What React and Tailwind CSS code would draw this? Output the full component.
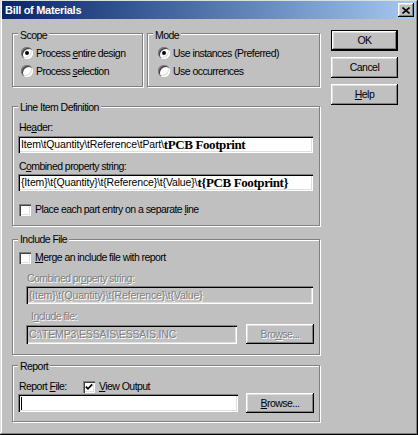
const sans = "font-['Liberation_Sans',Arial,sans-serif]";
const serifBold = "font-['Liberation_Serif','Times_New_Roman',serif] font-bold text-[13px] tracking-[-0.4px]";
const editText = "tracking-[-0.15px]";

const Group = ({ label, className, labelTop = "-top-[7px]", children }) => (
  <div
    className={`relative border border-[#808080] shadow-[inset_1px_1px_0_#fff,1px_1px_0_#fff] ${className}`}
  >
    <span className={`absolute left-[5px] bg-[#c0c0c0] px-[2px] leading-[13px] ${labelTop}`}>
      {label}
    </span>
    {children}
  </div>
);

const Radio = ({ checked }) => (
  <span className="w-[12px] h-[12px] rounded-full bg-white shrink-0 flex items-center justify-center shadow-[inset_1px_1px_0_#808080,inset_2px_2px_0_#404040,inset_-1px_-1px_0_#fff,inset_-2px_-2px_0_#dfdfdf]">
    {checked && <span className="w-[4px] h-[4px] rounded-full bg-black" />}
  </span>
);

const Check = ({ checked }) => (
  <span className="w-[12px] h-[12px] bg-white shrink-0 flex items-center justify-center shadow-[inset_1px_1px_0_#808080,inset_2px_2px_0_#404040,inset_-1px_-1px_0_#fff,inset_-2px_-2px_0_#dfdfdf]">
    {checked && (
      <svg width="8" height="8" viewBox="0 0 8 8">
        <path d="M0.8 3.6 L3 5.8 L7.2 1.4" stroke="#000" strokeWidth="1.8" fill="none" />
      </svg>
    )}
  </span>
);

const Button = ({ children, isDefault, disabled, className = "" }) => (
  <div
    className={`flex items-center justify-center bg-[#c0c0c0] ${
      isDefault ? "border border-black" : ""
    } ${disabled ? "text-[#808080] [text-shadow:1px_1px_0_#fff]" : ""} ${className}`}
  >
    <div className="w-full h-full flex items-center justify-center shadow-[inset_-1px_-1px_0_#000,inset_1px_1px_0_#fff,inset_-2px_-2px_0_#808080,inset_2px_2px_0_#dfdfdf]">
      {children}
    </div>
  </div>
);

const Edit = ({ children, disabled, className = "" }) => (
  <div
    className={`flex items-center pl-[3px] whitespace-nowrap overflow-hidden shadow-[inset_1px_1px_0_#808080,inset_2px_2px_0_#000,inset_-1px_-1px_0_#fff,inset_-2px_-2px_0_#dfdfdf] ${
      disabled ? "bg-[#c0c0c0] text-[#808080] [text-shadow:1px_1px_0_#fff]" : "bg-white"
    } ${className}`}
  >
    {children}
  </div>
);

const Dim = ({ children, className = "" }) => (
  <div className={`text-[#808080] [text-shadow:1px_1px_0_#fff] leading-[13px] ${className}`}>
    {children}
  </div>
);

export default function App() {
  return (
    <div
      className={`w-[418px] h-[435px] bg-[#c0c0c0] pt-[1px] px-[2px] pb-[2px] flex flex-col ${sans} text-[10.5px] tracking-[-0.55px] leading-[13px] text-black shadow-[inset_-1px_-1px_0_#000,inset_1px_1px_0_#dfdfdf,inset_-2px_-2px_0_#808080,inset_2px_2px_0_#fff]`}
    >
      {/* title bar */}
      <div className="h-[18px] shrink-0 flex items-center justify-between pl-[3px] pr-[2px] bg-linear-to-r from-[#0a246a] to-[#a6caf0]">
        <span className="font-bold text-white text-[11px] tracking-[-0.3px]">Bill of Materials</span>
        <Button className="w-[16px] h-[14px]">
          <svg width="8" height="7" viewBox="0 0 8 7">
            <path d="M0.5 0.5 L7.5 6.5 M7.5 0.5 L0.5 6.5" stroke="#000" strokeWidth="1.6" />
          </svg>
        </Button>
      </div>

      <div className="flex pl-[10px]">
        <div className="flex flex-col w-[308px]">
          <div className="flex gap-[4px] mt-[14px]">
            <Group label="Scope" labelTop="-top-[5px]" className="w-[131px] h-[54px] pt-[10px] pl-[8px]">
              <div className="h-[18px] flex items-center gap-[3px]">
                <Radio checked />
                <span>
                  Process <u>e</u>ntire design
                </span>
              </div>
              <div className="h-[18px] flex items-center gap-[3px]">
                <Radio />
                <span>
                  Process <u>s</u>election
                </span>
              </div>
            </Group>
            <Group label="Mode" labelTop="-top-[5px]" className="w-[173px] h-[54px] pt-[10px] pl-[10px]">
              <div className="h-[18px] flex items-center gap-[3px]">
                <Radio checked />
                <span>Use instances (Preferred)</span>
              </div>
              <div className="h-[18px] flex items-center gap-[3px]">
                <Radio />
                <span>Use occurrences</span>
              </div>
            </Group>
          </div>

          <Group
            label="Line Item Definition"
            labelTop="-top-[6px]"
            className="mt-[19px] h-[120px] pl-[5px] flex flex-col"
          >
            <div className="mt-[14px] pl-[1px]">
              He<u>a</u>der:
            </div>
            <Edit className="mt-[2px] h-[17px] w-[295px]">
              <span className={editText}>Item\tQuantity\tReference\tPart\</span>
              <span className={serifBold}>tPCB Footprint</span>
            </Edit>
            <div className="mt-[7px] pl-[1px]">
              C<u>o</u>mbined property string:
            </div>
            <Edit className="mt-[1px] h-[17px] w-[295px]">
              <span className={editText}>{"{Item}\\t{Quantity}\\t{Reference}\\t{Value}\\"}</span>
              <span className={serifBold}>{"t{PCB Footprint}"}</span>
            </Edit>
            <div className="mt-[12px] h-[13px] pl-[1px] flex items-center gap-[4px]">
              <Check />
              <span>
                Place each part entry on a separate <u>l</u>ine
              </span>
            </div>
          </Group>

          <Group label="Include File" className="mt-[13px] h-[116px] pl-[5px] flex flex-col">
            <div className="mt-[11px] h-[13px] pl-[1px] flex items-center gap-[4px]">
              <Check />
              <span>
                <u>M</u>erge an include file with report
              </span>
            </div>
            <Dim className="mt-[8px] ml-[9px]">
              Combined pr<u>o</u>perty string:
            </Dim>
            <Edit disabled className={`mt-[1px] ml-[8px] h-[18px] w-[287px] ${editText}`}>
              {"{Item}\\t{Quantity}\\t{Reference}\\t{Value}"}
            </Edit>
            <Dim className="mt-[6px] ml-[13px]">
              I<u>n</u>clude file:
            </Dim>
            <div className="mt-[1px] ml-[8px] flex items-center gap-[9px] h-[20px]">
              <Edit disabled className={`h-[19px] w-[211px] ${editText}`}>
                C:\TEMP3\ESSAIS\ESSAIS.INC
              </Edit>
              <Button disabled className="w-[68px] h-[20px]">
                <span>
                  Bro<u>w</u>se...
                </span>
              </Button>
            </div>
          </Group>

          <Group label="Report" labelTop="-top-[6px]" className="mt-[10px] h-[57px] pl-[5px] flex flex-col">
            <div className="mt-[14px] h-[13px] flex items-center">
              <span className="w-[65px] pl-[1px]">
                Report <u>F</u>ile:
              </span>
              <Check checked />
              <span className="ml-[4px]">
                <u>V</u>iew Output
              </span>
            </div>
            <div className="flex items-center gap-[8px] h-[20px]">
              <Edit className="h-[18px] w-[220px]">
                <span className="w-[1px] h-[13px] bg-black" />
              </Edit>
              <Button className="w-[68px] h-[20px]">
                <span>
                  <u>B</u>rowse...
                </span>
              </Button>
            </div>
          </Group>
        </div>

        <div className="ml-[11px] mt-[11px] flex flex-col gap-[6px]">
          <Button isDefault className="w-[67px] h-[21px]">
            OK
          </Button>
          <Button className="w-[67px] h-[21px]">Cancel</Button>
          <Button className="w-[67px] h-[21px]">
            <span>
              <u>H</u>elp
            </span>
          </Button>
        </div>
      </div>
    </div>
  );
}
